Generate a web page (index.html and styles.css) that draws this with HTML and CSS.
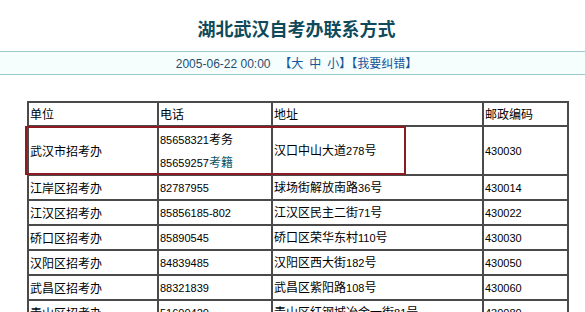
FILE: index.html
```html
<!DOCTYPE html>
<html lang="zh-CN">
<head>
<meta charset="utf-8">
<title>湖北武汉自考办联系方式</title>
<link rel="stylesheet" href="styles.css">
</head>
<body>
<h1 class="title">湖北武汉自考办联系方式</h1>
<div class="meta">
  <span class="date">2005-06-22 00:00</span>
  <span class="links">【大&ensp;中&ensp;小】【我要纠错】</span>
</div>
<div class="table-wrap">
  <table class="contacts">
    <colgroup>
      <col class="c1"><col class="c2"><col class="c3"><col class="c4">
    </colgroup>
    <tr class="head"><td>单位</td><td>电话</td><td>地址</td><td>邮政编码</td></tr>
    <tr class="tall">
      <td>武汉市招考办</td>
      <td><div class="line"><span class="num">85658321</span>考务</div><div class="line"><span class="num">85659257</span><a class="link">考籍</a></div></td>
      <td>汉口中山大道<span class="num">278</span>号</td>
      <td><span class="num">430030</span></td>
    </tr>
    <tr><td>江岸区招考办</td><td><span class="num">82787955</span></td><td>球场街解放南路<span class="num">36</span>号</td><td><span class="num">430014</span></td></tr>
    <tr><td>江汉区招考办</td><td><span class="num">85856185-802</span></td><td>江汉区民主二街<span class="num">71</span>号</td><td><span class="num">430022</span></td></tr>
    <tr><td>硚口区招考办</td><td><span class="num">85890545</span></td><td>硚口区荣华东村<span class="num">110</span>号</td><td><span class="num">430030</span></td></tr>
    <tr><td>汉阳区招考办</td><td><span class="num">84839485</span></td><td>汉阳区西大街<span class="num">182</span>号</td><td><span class="num">430050</span></td></tr>
    <tr><td>武昌区招考办</td><td><span class="num">88321839</span></td><td>武昌区紫阳路<span class="num">108</span>号</td><td><span class="num">430060</span></td></tr>
    <tr><td>青山区招考办</td><td><span class="num">51600420</span></td><td>青山区红钢城冶金一街<span class="num">81</span>号</td><td><span class="num">430080</span></td></tr>
  </table>
  <div class="highlight"></div>
</div>
</body>
</html>
```
FILE: styles.css
```css
html, body {
  margin: 0;
  padding: 0;
  background: #ffffff;
  overflow: hidden;
}
body {
  font-family: "Noto Sans CJK SC", sans-serif;
  font-size: 12px;
  color: #000;
}
.title {
  margin: 0;
  padding: 17px 0 12px 8px;
  line-height: 22px;
  font-size: 18px;
  font-weight: bold;
  text-align: center;
  color: #0f4a5a;
}
.meta {
  border-top: 1px solid #9cc9cc;
  border-bottom: 1px solid #9cc9cc;
  background: #f6fdfd;
  line-height: 22px;
  height: 22px;
  text-align: center;
  padding-left: 8px;
}
.date {
  font-family: "Liberation Sans", sans-serif;
  font-size: 12px;
  color: #1e4f6e;
  margin-right: 6px;
}
.links {
  color: #12579a;
  font-size: 12px;
}
.table-wrap {
  position: relative;
  margin: 26px 0 0 27px;
  width: 540px;
}
.contacts {
  width: 540px;
  table-layout: fixed;
  border-collapse: separate;
  border-spacing: 0;
  border: 1px solid #4a4a4a;
}
.c1 { width: 130px; }
.c2 { width: 114px; }
.c3 { width: 211px; }
.c4 { width: 85px; }
.contacts td {
  border: 1px solid #4a4a4a;
  padding: 0 1px;
  height: 23px;
  line-height: 16px;
  vertical-align: middle;
  white-space: nowrap;
  overflow: hidden;
}
.contacts tr.head td {
  height: 22px;
}
.contacts tr.tall td {
  height: 47px;
}
.line {
  line-height: 22px;
}
.num {
  font-family: "Liberation Sans", sans-serif;
  font-size: 11px;
}
.link {
  color: #0e5566;
}
.highlight {
  position: absolute;
  left: -2px;
  top: 25px;
  width: 377px;
  height: 45px;
  border: 2px solid #8c1c22;
  pointer-events: none;
}
```
